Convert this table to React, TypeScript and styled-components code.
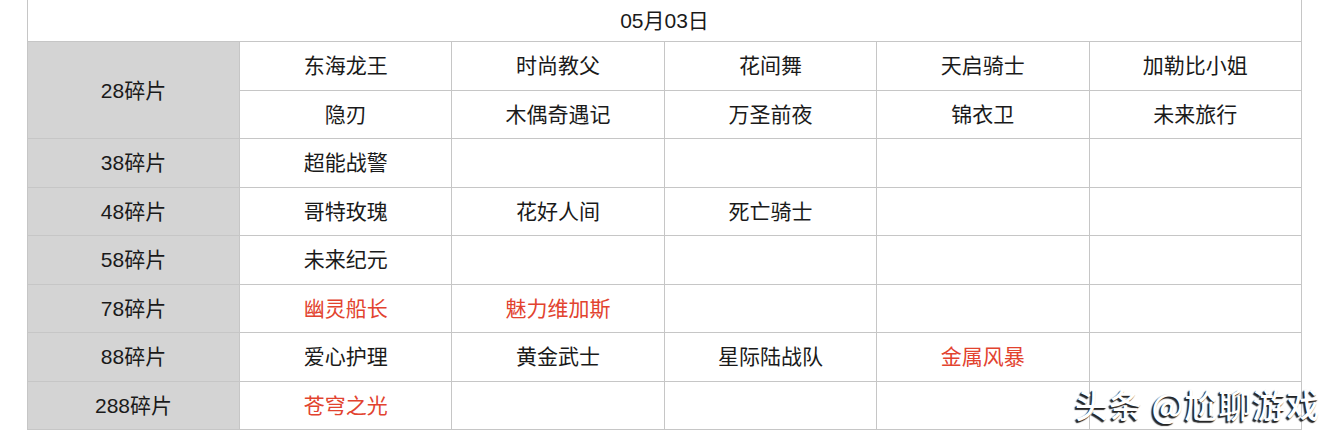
import styled, { createGlobalStyle } from "styled-components";

const GlobalStyle = createGlobalStyle`
    body {
        margin: 0;
        background: #fff;
        font-family: "Liberation Sans", "Noto Sans CJK SC", sans-serif;
    }
`;

type Cell = { text: string; red?: boolean };

const rows: { label: string; items: Cell[][] }[] = [
    {
        label: "28碎片",
        items: [
            [{ text: "东海龙王" }, { text: "时尚教父" }, { text: "花间舞" }, { text: "天启骑士" }, { text: "加勒比小姐" }],
            [{ text: "隐刃" }, { text: "木偶奇遇记" }, { text: "万圣前夜" }, { text: "锦衣卫" }, { text: "未来旅行" }],
        ],
    },
    { label: "38碎片", items: [[{ text: "超能战警" }]] },
    { label: "48碎片", items: [[{ text: "哥特玫瑰" }, { text: "花好人间" }, { text: "死亡骑士" }]] },
    { label: "58碎片", items: [[{ text: "未来纪元" }]] },
    { label: "78碎片", items: [[{ text: "幽灵船长", red: true }, { text: "魅力维加斯", red: true }]] },
    {
        label: "88碎片",
        items: [[{ text: "爱心护理" }, { text: "黄金武士" }, { text: "星际陆战队" }, { text: "金属风暴", red: true }]],
    },
    { label: "288碎片", items: [[{ text: "苍穹之光", red: true }]] },
];

const App = () => {
    return (
        <StyledPage>
            <GlobalStyle />
            <StyledTable>
                <colgroup>
                    <col style={{ width: "212px" }} />
                    {[0, 1, 2, 3, 4].map((i) => (
                        <col key={i} />
                    ))}
                </colgroup>
                <tbody>
                    <tr>
                        <HeadCell colSpan={6}>05月03日</HeadCell>
                    </tr>
                    {rows.map((row) =>
                        row.items.map((line, li) => (
                            <tr key={row.label + li}>
                                {li === 0 && <LabelCell rowSpan={row.items.length}>{row.label}</LabelCell>}
                                {[0, 1, 2, 3, 4].map((c) => (
                                    <ItemCell key={c} $red={line[c]?.red}>
                                        {line[c]?.text ?? ""}
                                    </ItemCell>
                                ))}
                            </tr>
                        ))
                    )}
                </tbody>
            </StyledTable>
            <Watermark>头条 @尬聊游戏</Watermark>
        </StyledPage>
    );
};

export default App;

const StyledPage = styled.div`
    position: relative;
    width: 1334px;
    height: 438px;
    overflow: hidden;
    padding-left: 27px;
    box-sizing: border-box;
`;

const StyledTable = styled.table`
    width: 1275px;
    table-layout: fixed;
    border-collapse: collapse;
    margin-top: -1px;

    td {
        border: 1px solid #c6c6c6;
        text-align: center;
        padding: 0 0 3px;
        color: #1a1a1a;
        font-size: 21px;
    }
`;

const HeadCell = styled.td`
    height: 38px;
`;

const LabelCell = styled.td`
    background: #d4d4d4;
`;

const ItemCell = styled.td<{ $red?: boolean }>`
    height: 44.5px;
    && {
        color: ${(p) => (p.$red ? "#e2432f" : "#1a1a1a")};
    }
`;

const Watermark = styled.div`
    position: absolute;
    left: 1075px;
    top: 380px;
    font-size: 33px;
    color: #fff;
    letter-spacing: 1px;
    font-weight: 500;
    text-shadow: -1px 1px 1px #222, -2px 2px 1px #333;
    font-family: "Noto Sans CJK SC", sans-serif;
`;
